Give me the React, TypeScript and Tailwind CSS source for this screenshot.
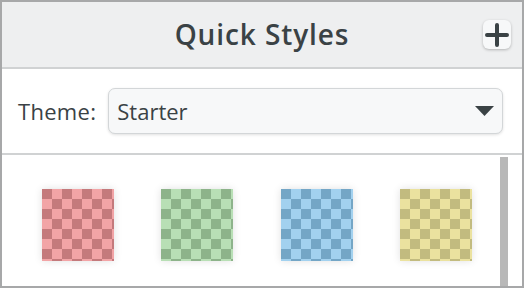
const swatches = [
  'bg-[image:repeating-conic-gradient(#f2a4a6_0%_25%,#c47a7c_0%_50%)]',
  'bg-[image:repeating-conic-gradient(#b8dfb5_0%_25%,#8db38a_0%_50%)]',
  'bg-[image:repeating-conic-gradient(#a2d1ef_0%_25%,#74a6c6_0%_50%)]',
  'bg-[image:repeating-conic-gradient(#ebe29f_0%_25%,#c2bb7f_0%_50%)]',
]

export default function App() {
  return (
    <div
      className="flex h-[288px] w-[524px] flex-col border-2 border-[#a7a8a9] bg-white text-[#3a4245]"
      style={{ fontFamily: '"Open Sans", Lato, sans-serif' }}
    >
      {/* header */}
      <div className="grid h-[67px] shrink-0 grid-cols-[1fr_auto_1fr] items-center border-b-2 border-[#d0d2d3] bg-[#eeeff0]">
        <div />
        <h1 className="pb-[2px] text-[28px] font-semibold tracking-[0.9px]">Quick Styles</h1>
        <div className="flex justify-end pr-[11px]">
          <button className="flex h-[29px] w-[28px] items-center justify-center rounded-[6px] bg-[#f7f8f9] shadow-[0_1px_3px_rgba(0,0,0,0.25)]">
            <svg width="24" height="24" viewBox="0 0 24 24">
              <path d="M12 2v20M2 12h20" stroke="#3a4245" strokeWidth="4" strokeLinecap="round" />
            </svg>
          </button>
        </div>
      </div>

      {/* theme row */}
      <div className="flex h-[86px] shrink-0 items-center gap-[12px] border-b-2 border-[#d0d2d3] pl-[16px] pr-[19px]">
        <span className="text-[22px] tracking-[0.3px]">Theme:</span>
        <div className="flex h-[46px] flex-1 items-center justify-between rounded-[7px] border border-[#d3d6d8] bg-[#f7f8f9] pl-[8px] pr-[8px] shadow-[0_1px_3px_rgba(0,0,0,0.12)]">
          <span className="text-[22px]">Starter</span>
          <svg width="19" height="10" viewBox="0 0 19 10">
            <path d="M0 0h19l-9.5 10z" fill="#3a4245" />
          </svg>
        </div>
      </div>

      {/* swatch list */}
      <div className="flex flex-1">
        <div className="ml-[16px] grid w-[478px] grid-cols-4 pt-[34px]">
          {swatches.map((bg, i) => (
            <div key={i} className="flex justify-center">
              <div
                className={`h-[72px] w-[72px] bg-size-[20px_20px] shadow-[0_0_8px_rgba(0,0,0,0.12)] ${bg}`}
              />
            </div>
          ))}
        </div>
        <div className="ml-auto mr-[14px] mt-[2px] w-[8px] bg-[#b8b8b8]" />
      </div>
    </div>
  )
}
